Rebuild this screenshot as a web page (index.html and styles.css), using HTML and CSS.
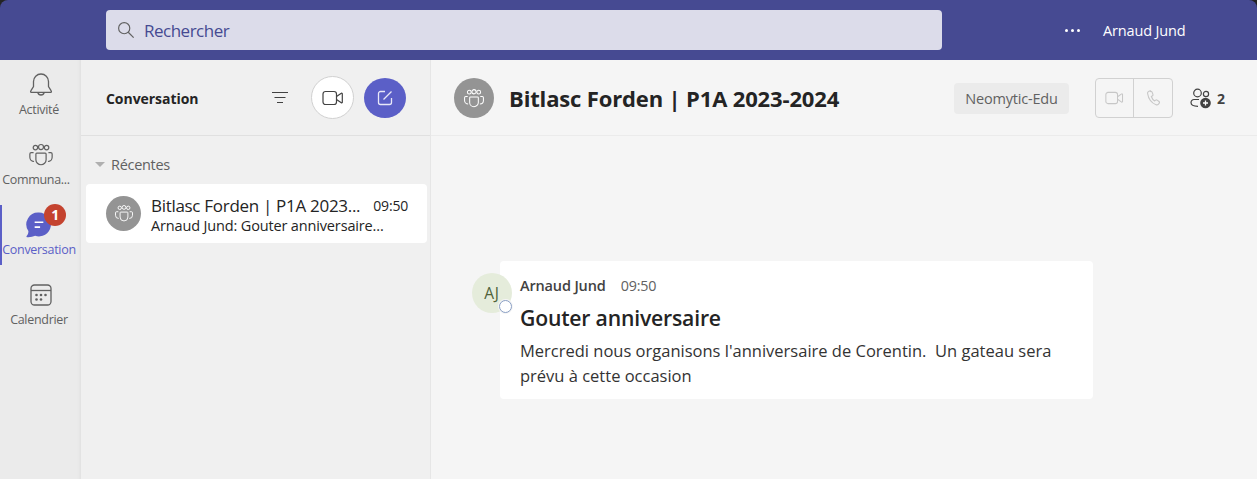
FILE: index.html
```html
<!DOCTYPE html>
<html lang="fr">
<head>
    <meta charset="UTF-8">
    <title>Conversation | Bitlasc Forden</title>
    <link rel="stylesheet" href="styles.css">
</head>
<body>
    <svg class="icon-defs" width="0" height="0">
        <symbol id="people" viewBox="0 0 28 24">
            <circle cx="8" cy="4" r="2.4"/>
            <circle cx="14" cy="3.4" r="2.7"/>
            <circle cx="20" cy="4" r="2.4"/>
            <path d="M9.5 10h9a1 1 0 0 1 1 1v6a5.5 5.5 0 0 1-11 0v-6a1 1 0 0 1 1-1z"/>
            <path d="M6 9.5H3.5a1.5 1.5 0 0 0-1.5 1.500v3.500a4.500 4.500 0 0 0 4.500 4.500"/>
            <path d="M22 9.500h2.500a1.500 1.500 0 0 1 1.500 1.500v3.500a4.500 4.500 0 0 1-4.500 4.500"/>
        </symbol>
        <symbol id="video" viewBox="0 0 22 16">
            <rect x="1" y="1.500" width="13.500" height="13" rx="2.500"/>
            <path d="M14.500 6.500l4.800-3.200a.6.6 0 0 1 1 .5v8.400a.6.6 0 0 1-1 .5l-4.800-3.200"/>
        </symbol>
    </svg>

    <header class="topbar">
        <div class="search-box">
            <svg class="search-icon" viewBox="0 0 20 20"><circle cx="8" cy="8" r="6.200"/><path d="M12.500 12.500l6 6"/></svg>
            <span>Rechercher</span>
        </div>
        <div class="more-dots"><i></i><i></i><i></i></div>
        <div class="user-name">Arnaud Jund</div>
    </header>

    <div class="app-body">
        <nav class="rail">
            <div class="rail-item">
                <svg class="rail-icon" viewBox="0 0 26 26"><path d="M13 2a7.500 7.500 0 0 0-7.500 7.500v5L2.800 18.800a1 1 0 0 0 .8 1.600h18.800a1 1 0 0 0 .8-1.600l-2.700-4.300v-5A7.500 7.500 0 0 0 13 2z"/><path d="M9.800 20.500a3.300 3.300 0 0 0 6.400 0"/></svg>
                <span>Activité</span>
            </div>
            <div class="rail-item">
                <svg class="rail-icon"><use href="#people"/></svg>
                <span class="label-cut">Communa...</span>
            </div>
            <div class="rail-item active">
                <svg class="rail-icon" viewBox="2 2 23 24"><path class="chat-fill" d="M13.500 2.500a11 11 0 1 1-3.600 21.400c-2 1-4.600 1.500-7.400 1.300-.6 0-.8-.6-.4-1 1.100-1.300 1.700-2.900 1.600-4.600a11 11 0 0 1 9.800-17.100z"/><path class="chat-lines" d="M9.500 11.500h8M9.500 16h5"/></svg>
                <span>Conversation</span>
                <b class="badge">1</b>
            </div>
            <div class="rail-item">
                <svg class="rail-icon" viewBox="0 0 26 26"><rect x="3" y="3" width="20" height="20" rx="3.500"/><path d="M3 8.500h20"/><g class="cal-dots"><circle cx="8.500" cy="13" r="1.300"/><circle cx="13" cy="13" r="1.300"/><circle cx="17.500" cy="13" r="1.300"/><circle cx="8.500" cy="17.500" r="1.300"/><circle cx="13" cy="17.500" r="1.300"/></g></svg>
                <span>Calendrier</span>
            </div>
        </nav>

        <aside class="side-list">
            <div class="side-header">
                <h2>Conversation</h2>
                <svg class="filter-icon" viewBox="0 0 18 14"><path d="M1 1.500h16M3.500 6.500h11M6 11.500h6"/></svg>
                <button class="round-btn video-btn"><svg class="video-icon"><use href="#video"/></svg></button>
                <button class="round-btn compose-btn">
                    <svg viewBox="0 0 18 18"><path d="M9 2.500H4.500a2 2 0 0 0-2 2v9a2 2 0 0 0 2 2h9a2 2 0 0 0 2-2V9"/><path d="M7.500 10.500L15.500 2.500"/></svg>
                </button>
            </div>
            <div class="section-label"><i class="caret"></i>Récentes</div>
            <div class="chat-row">
                <div class="group-avatar small"><svg><use href="#people"/></svg></div>
                <div class="chat-text">
                    <div class="chat-top">
                        <span class="chat-title">Bitlasc Forden | P1A 2023...</span>
                        <span class="chat-time">09:50</span>
                    </div>
                    <div class="chat-preview">Arnaud Jund: Gouter anniversaire...</div>
                </div>
            </div>
        </aside>

        <main class="main-pane">
            <div class="main-header">
                <div class="group-avatar"><svg><use href="#people"/></svg></div>
                <h1>Bitlasc Forden | P1A 2023-2024</h1>
                <div class="org-tag">Neomytic-Edu</div>
                <div class="call-group">
                    <div class="call-btn"><svg class="call-video"><use href="#video"/></svg></div>
                    <div class="call-btn">
                        <svg class="call-phone" viewBox="0 0 16 18"><path d="M4.500 1.200L2.800 2a2 2 0 0 0-1.100 2.200c.9 5.500 4 10 9 12a2.400 2.400 0 0 0 2.600-.7l.8-1a1.200 1.200 0 0 0-.2-1.700l-2-1.500a1.300 1.300 0 0 0-1.600 0l-1 .8c-1.800-1-3-2.800-3.600-4.700l1.200-.7a1.300 1.300 0 0 0 .5-1.500l-.9-2.500a1.200 1.200 0 0 0-1.600-.7z"/></svg>
                    </div>
                </div>
                <div class="people-count">
                    <svg viewBox="0 0 22 21">
                        <circle class="person" cx="7.500" cy="5" r="3.800"/>
                        <circle class="person" cx="16" cy="6" r="2.600"/>
                        <path class="person" d="M9 11.500H4a3 3 0 0 0-3 3c0 2.500 2.500 3.800 7 3.800"/>
                        <circle class="plus-bg" cx="15.500" cy="15" r="5.300"/>
                        <path class="plus-mark" d="M15.500 12.500v5M13 15h5"/>
                    </svg>
                    <b>2</b>
                </div>
            </div>
            <div class="thread">
                <div class="message">
                    <div class="author-avatar">AJ<i class="status-dot"></i></div>
                    <div class="message-card">
                        <div class="message-meta"><b>Arnaud Jund</b><span>09:50</span></div>
                        <h3>Gouter anniversaire</h3>
                        <p>Mercredi nous organisons l'anniversaire de Corentin.&nbsp; Un gateau sera prévu à cette occasion</p>
                    </div>
                </div>
            </div>
        </main>
    </div>
</body>
</html>
```

FILE: styles.css
```css
* {
    box-sizing: border-box;
}
html, body {
    height: 100%;
}
body {
    margin: 0;
    font-family: "Open Sans", "Noto Sans", Arial, sans-serif;
    background-color: #242424;
    color: #242424;
    overflow: hidden;
    display: flex;
    flex-direction: column;
}
svg {
    display: block;
    fill: none;
    stroke: currentColor;
}
.icon-defs {
    position: absolute;
}

/* top bar */
.topbar {
    height: 60px;
    flex-shrink: 0;
    background-color: #464a92;
    border-radius: 8px 8px 0 0;
    display: flex;
    align-items: center;
    padding-left: 106px;
    color: white;
}
.search-box {
    width: 836px;
    height: 40px;
    background-color: #dcdcea;
    border-radius: 4px;
    display: flex;
    align-items: center;
    padding-left: 11px;
    color: #464a92;
    font-size: 17px;
    letter-spacing: -0.5px;
}
.search-icon {
    width: 18px;
    height: 18px;
    margin-right: 9px;
    color: #616161;
    stroke-width: 1.300;
}
.more-dots {
    display: flex;
    gap: 3px;
    margin-left: 123px;
}
.more-dots i {
    width: 3px;
    height: 3px;
    border-radius: 50%;
    background-color: white;
}
.user-name {
    margin-left: 23px;
    font-size: 14.500px;
    letter-spacing: -0.15px;
}

.app-body {
    flex: 1;
    display: flex;
    min-height: 0;
}

/* left rail */
.rail {
    width: 81px;
    background-color: #ebebeb;
    padding-top: 5px;
    display: flex;
    flex-direction: column;
    gap: 10px;
    color: #616161;
    box-shadow: inset -4px 0 4px -4px rgba(0, 0, 0, 0.08);
}
.rail-item {
    position: relative;
    height: 60px;
    padding-top: 7px;
    display: flex;
    flex-direction: column;
    align-items: center;
    font-size: 12.500px;
    letter-spacing: -0.3px;
    white-space: nowrap;
}
.rail-item span {
    position: absolute;
    top: 36px;
    left: 0;
    width: 78px;
    text-align: center;
}
.rail-item span.label-cut {
    width: 72px;
}
.rail-icon {
    width: 26px;
    height: 26px;
    stroke-width: 1.300;
}
.rail-item.active {
    color: #5b5fc7;
    border-left: 2px solid #5b5fc7;
    padding-right: 5px;
}
.rail-item.active span {
    left: -2px;
}
.chat-fill {
    fill: #5b5fc7;
    stroke: none;
}
.chat-lines {
    stroke: white;
    stroke-width: 1.500;
}
.cal-dots {
    fill: currentColor;
    stroke: none;
}
.badge {
    position: absolute;
    top: -1px;
    left: 42px;
    width: 22px;
    height: 22px;
    border-radius: 50%;
    background-color: #c4432f;
    color: white;
    font-size: 14px;
    line-height: 21px;
    text-align: center;
}

/* conversation list */
.side-list {
    width: 350px;
    background-color: #f0f0f0;
    border-right: 1px solid #e6e6e6;
}
.side-header {
    height: 76px;
    border-bottom: 1px solid #e0e0e0;
    display: flex;
    align-items: center;
    padding-left: 25px;
}
.side-header h2 {
    margin: 2px 0 0;
    width: 165px;
    font-size: 14px;
    font-weight: 700;
    letter-spacing: -0.05px;
}
.filter-icon {
    width: 18px;
    height: 14px;
    margin-right: 22px;
    color: #424242;
    stroke-width: 1;
}
.round-btn {
    width: 43px;
    height: 43px;
    border-radius: 50%;
    padding: 0;
    display: flex;
    align-items: center;
    justify-content: center;
}
.video-btn {
    background-color: white;
    border: 1px solid #d1d1d1;
    margin-right: 10px;
    color: #424242;
}
.video-icon {
    width: 22px;
    height: 16px;
    stroke-width: 1.200;
}
.compose-btn {
    width: 42px;
    height: 40px;
    background-color: #5b5fc7;
    border: 0;
    color: white;
}
.compose-btn svg {
    width: 18px;
    height: 18px;
    stroke-width: 1.300;
    color: #e8e8f8;
}
.section-label {
    display: flex;
    align-items: center;
    height: 20px;
    margin-top: 18px;
    margin-bottom: 10px;
    padding-left: 14px;
    font-size: 14.500px;
    letter-spacing: -0.3px;
    color: #616161;
}
.caret {
    width: 0;
    height: 0;
    border-left: 5px solid transparent;
    border-right: 5px solid transparent;
    border-top: 5px solid #b0b0b0;
    margin-right: 6px;
}
.chat-row {
    margin: 0 3px 0 5px;
    height: 59px;
    background-color: white;
    border-radius: 4px;
    display: flex;
    align-items: center;
    padding: 0 19px 0 20px;
}
.group-avatar {
    width: 40px;
    height: 40px;
    flex-shrink: 0;
    border-radius: 50%;
    background-color: #949494;
    color: white;
    display: flex;
    align-items: center;
    justify-content: center;
}
.group-avatar svg {
    width: 22px;
    height: 19px;
    stroke-width: 1.300;
}
.group-avatar.small {
    width: 35px;
    height: 35px;
}
.group-avatar.small svg {
    width: 20px;
    height: 17px;
}
.chat-text {
    flex: 1;
    margin-left: 10px;
    min-width: 0;
}
.chat-top {
    display: flex;
    justify-content: space-between;
    align-items: center;
    height: 23px;
}
.chat-title {
    font-size: 17px;
    letter-spacing: -0.3px;
    white-space: nowrap;
}
.chat-time {
    font-size: 14px;
    letter-spacing: -0.2px;
}
.chat-preview {
    font-size: 14.500px;
    line-height: 17px;
    letter-spacing: -0.15px;
    white-space: nowrap;
}

/* main pane */
.main-pane {
    flex: 1;
    background-color: #f5f5f5;
    display: flex;
    flex-direction: column;
}
.main-header {
    height: 76px;
    padding-top: 1px;
    border-bottom: 1px solid #ebebeb;
    display: flex;
    align-items: center;
    padding-left: 23px;
}
.main-header h1 {
    margin: 0 0 0 15px;
    width: 445px;
    font-size: 22px;
    font-weight: 700;
    letter-spacing: -0.15px;
    white-space: nowrap;
}
.org-tag {
    width: 115px;
    height: 31px;
    background-color: #ebebeb;
    border-radius: 4px;
    font-size: 14.500px;
    letter-spacing: -0.2px;
    line-height: 31px;
    text-align: center;
    color: #616161;
}
.call-group {
    display: flex;
    height: 40px;
    margin-left: 26px;
    border: 1px solid #d1d1d1;
    border-radius: 4px;
    color: #c7c7c7;
}
.call-btn {
    width: 37px;
    display: flex;
    align-items: center;
    justify-content: center;
}
.call-btn + .call-btn {
    width: 39px;
    border-left: 1px solid #d1d1d1;
}
.call-video {
    width: 19px;
    height: 14px;
    stroke-width: 1.200;
}
.call-phone {
    width: 15px;
    height: 18px;
    stroke-width: 1.200;
}
.people-count {
    display: flex;
    align-items: center;
    margin-left: 17px;
    gap: 5px;
    color: #424242;
    font-size: 14px;
}
.people-count svg {
    width: 22px;
    height: 21px;
}
.person {
    stroke-width: 1.200;
}
.plus-bg {
    fill: #424242;
    stroke: none;
}
.plus-mark {
    stroke: white;
    stroke-width: 1.300;
}

/* message */
.thread {
    flex: 1;
    padding: 125px 164px 0 41px;
}
.message {
    display: flex;
    align-items: flex-start;
}
.author-avatar {
    position: relative;
    z-index: 1;
    width: 40px;
    height: 40px;
    flex-shrink: 0;
    margin-top: 12px;
    margin-right: -12px;
    border-radius: 50%;
    background-color: #e5ecdb;
    color: #4f6339;
    font-size: 15.500px;
    letter-spacing: 0.7px;
    line-height: 40px;
    text-align: center;
}
.status-dot {
    position: absolute;
    right: 0;
    bottom: 0;
    width: 13px;
    height: 13px;
    border-radius: 50%;
    background-color: white;
    border: 1px solid #8a9fc4;
    box-shadow: 0 0 0 1px #f5f5f5;
}
.message-card {
    flex: 1;
    height: 138px;
    background-color: white;
    border-radius: 4px;
    padding: 13px 20px 0;
}
.message-meta {
    display: flex;
    align-items: center;
    height: 23px;
    font-size: 14.500px;
    letter-spacing: -0.15px;
}
.message-meta b {
    font-weight: 600;
    color: #424242;
}
.message-meta span {
    margin-left: 15px;
    font-size: 14.300px;
    color: #616161;
}
.message-card h3 {
    margin: 7px 0 0;
    font-size: 21.200px;
    line-height: 28px;
    font-weight: 600;
    letter-spacing: -0.2px;
}
.message-card p {
    margin: 6px 0 0;
    font-size: 16.500px;
    line-height: 25px;
    letter-spacing: 0;
    color: #333;
    max-width: 545px;
}
```
